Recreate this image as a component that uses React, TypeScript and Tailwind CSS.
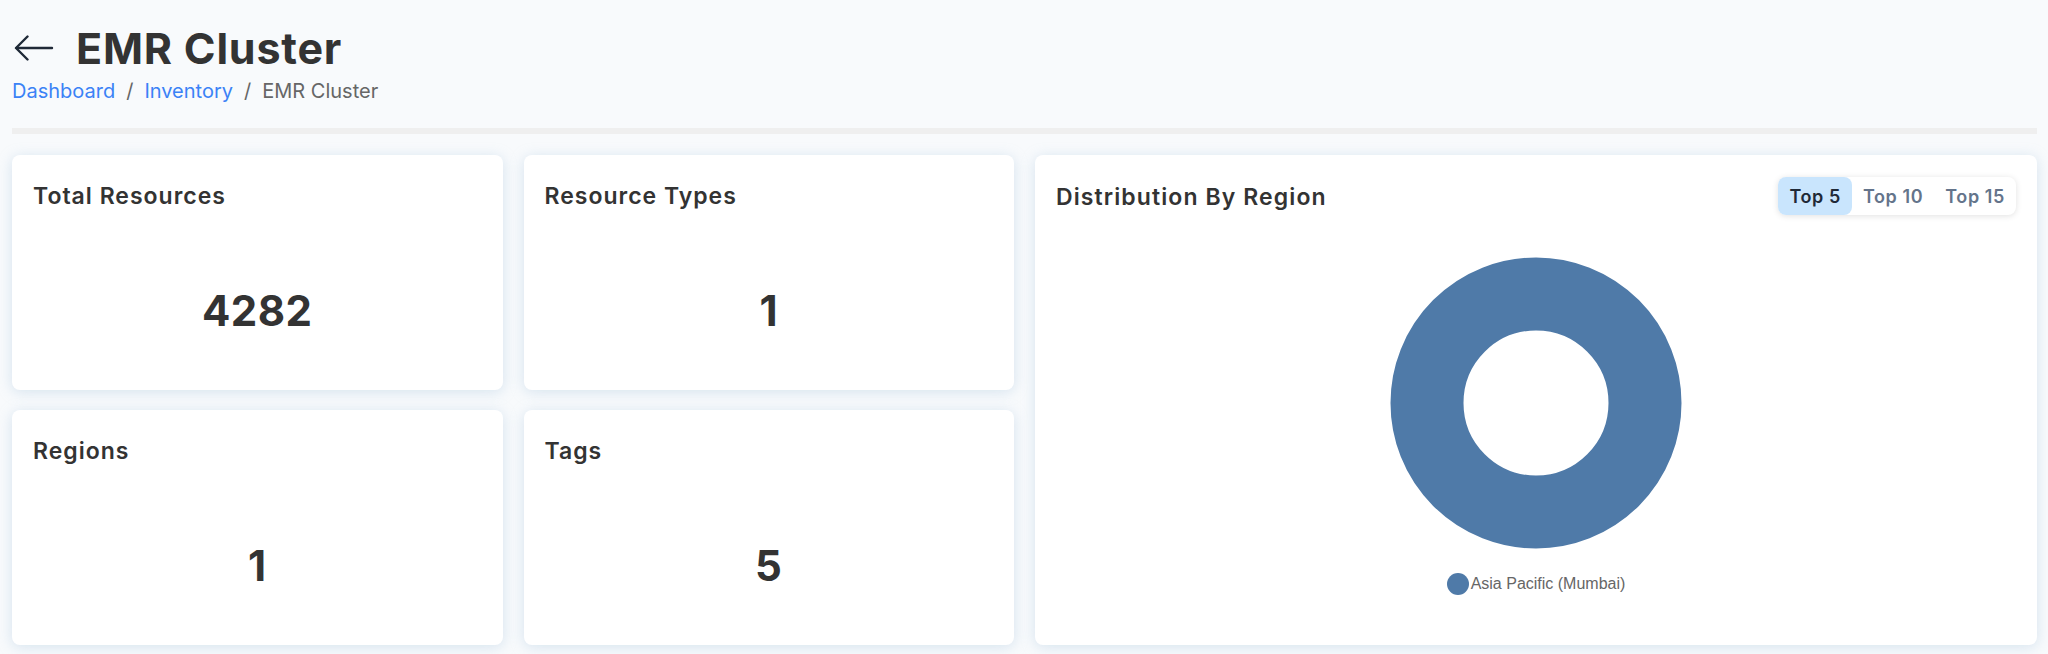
import React from 'react';

const font = { fontFamily: 'Inter, "Noto Sans", sans-serif' };

function BackArrow() {
  return (
    <svg width="40" height="26" viewBox="0 0 40 26" fill="none" className="text-[#1f2937]">
      <path d="M38 13H2.5" stroke="currentColor" strokeWidth="2.4" strokeLinecap="round" />
      <path d="M13.5 1.5 2 13l11.5 11.5" stroke="currentColor" strokeWidth="2.4" strokeLinecap="round" strokeLinejoin="round" />
    </svg>
  );
}

interface StatCardProps {
  title: string;
  value: string;
}

function StatCard({ title, value }: StatCardProps) {
  return (
    <div className="flex flex-col rounded-lg bg-white px-[21px] pt-[27px] shadow-[0_2px_14px_rgba(150,185,215,0.35)]">
      <h3 className="text-[23px] font-semibold leading-7 tracking-[1px] text-[#333333]">{title}</h3>
      <div className="flex flex-1 items-start justify-center pt-[80px]">
        <span className="text-[42px] font-bold leading-[42px] tracking-[0.5px] text-[#333333]">{value}</span>
      </div>
    </div>
  );
}

function RegionCard() {
  const tabs = ['Top 5', 'Top 10', 'Top 15'];
  return (
    <div className="col-span-2 row-span-2 flex flex-col rounded-lg bg-white px-[21px] pt-[22px] shadow-[0_2px_14px_rgba(150,185,215,0.35)]">
      <div className="flex h-[38px] items-center justify-between">
        <h3 className="pt-[2px] text-[23px] font-semibold leading-7 tracking-[1.1px] text-[#333333]">Distribution By Region</h3>
        <div className="flex h-[38px] rounded-lg bg-white shadow-[0_1px_6px_rgba(0,0,0,0.12)]">
          {tabs.map((t, i) => (
            <button
              key={t}
              className={
                i === 0
                  ? 'rounded-lg bg-[#c9e5fd] px-[11px] text-[18px] font-semibold tracking-[0.6px] text-[#1f2937]'
                  : 'px-[11px] text-[18px] font-semibold tracking-[0.6px] text-[#64748b]'
              }
            >
              {t}
            </button>
          ))}
        </div>
      </div>
      <div className="mt-[42px] flex justify-center">
        <svg width="292" height="292" viewBox="0 0 292 292">
          <circle cx="146" cy="146" r="109" fill="none" stroke="#4f7aa8" strokeWidth="73" />
        </svg>
      </div>
      <div className="mt-[23px] flex items-center justify-center gap-[2px]">
        <span className="h-[22px] w-[22px] rounded-full bg-[#4f7aa8]" />
        <span className="text-[16px] text-[#666666]" style={{ fontFamily: '"Liberation Sans", Arial, sans-serif' }}>
          Asia Pacific (Mumbai)
        </span>
      </div>
    </div>
  );
}

export default function App() {
  return (
    <div className="min-h-[654px] bg-[#f8fafc] pl-3 pr-[11px] pt-[22px]" style={font}>
      <div className="flex items-center gap-[22px] pl-[2px]">
        <BackArrow />
        <h1 className="text-[43px] font-bold leading-[52px] tracking-[0.8px] text-[#333333]">EMR Cluster</h1>
      </div>
      <nav className="mt-[5px] flex items-center gap-[11px] text-[20px] leading-6">
        <a className="text-[#3b82f6]">Dashboard</a>
        <span className="text-[#666666]">/</span>
        <a className="text-[#3b82f6]">Inventory</a>
        <span className="text-[#666666]">/</span>
        <span className="text-[#666666]">EMR Cluster</span>
      </nav>
      <div className="mt-[25px] h-[6px] bg-[#efefef]" />
      <div className="mt-[21px] grid grid-cols-4 grid-rows-[235px_235px] gap-x-[21px] gap-y-5">
        <StatCard title="Total Resources" value="4282" />
        <StatCard title="Resource Types" value="1" />
        <RegionCard />
        <StatCard title="Regions" value="1" />
        <StatCard title="Tags" value="5" />
      </div>
    </div>
  );
}
